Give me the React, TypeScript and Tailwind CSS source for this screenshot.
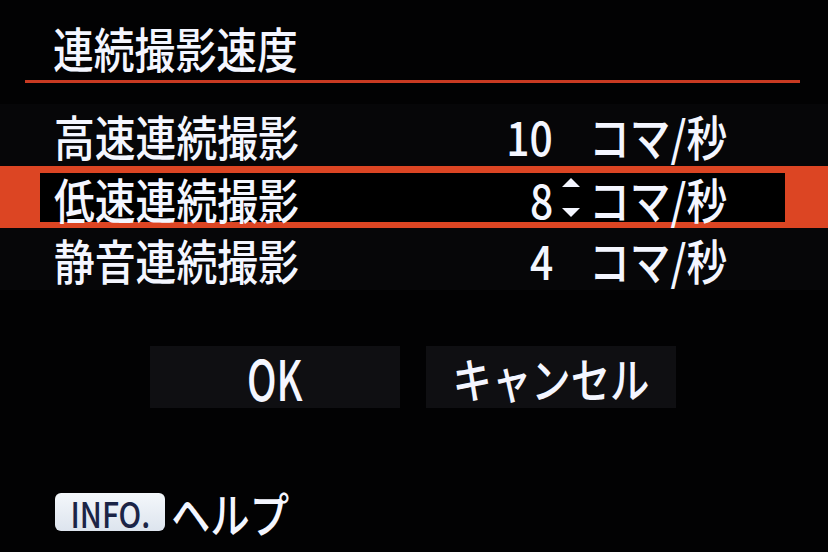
const font = { fontFamily: '"Noto Sans CJK JP", "Noto Sans", sans-serif' };

type Rate = { label: string; value: string; selected?: boolean };

const rates: Rate[] = [
  { label: "高速連続撮影", value: "10" },
  { label: "低速連続撮影", value: "8", selected: true },
  { label: "静音連続撮影", value: "4" },
];

// narrow camera-menu lettering
const Narrow = ({ children, right = false, className = "" }: { children: React.ReactNode; right?: boolean; className?: string }) => (
  <span className={`inline-block whitespace-nowrap scale-x-[0.85] ${right ? "origin-right" : "origin-left"} ${className}`}>
    {children}
  </span>
);

const UpDown = () => (
  <svg width="18" height="40" viewBox="0 0 18 40" className="ml-[9px]">
    <polygon points="9,0 18,9 0,9" fill="#f4f6ff" />
    <polygon points="0,30 18,30 9,39" fill="#f4f6ff" />
  </svg>
);

const RateRow = ({ rate }: { rate: Rate }) => {
  const cells = (
    <>
      <div className={rate.selected ? "w-[414px] pl-[14px]" : "w-[454px] pl-[54px]"}>
        <Narrow>{rate.label}</Narrow>
      </div>
      <div className="w-[99px] flex justify-end">
        <Narrow right>{rate.value}</Narrow>
      </div>
      <div className="w-[36px] flex items-center">{rate.selected && <UpDown />}</div>
      <div>
        <Narrow>コマ/秒</Narrow>
      </div>
    </>
  );

  if (rate.selected) {
    return (
      <div className="h-[62px] bg-[#dc4523] pl-[40px] pr-[43px] pt-[7px] pb-[6px]">
        <div className="h-full bg-black flex items-center leading-[40px]">{cells}</div>
      </div>
    );
  }
  return <div className="h-[62px] flex items-center leading-[40px] bg-[#060608]">{cells}</div>;
};

export default function App() {
  return (
    <div className="w-[828px] h-[552px] bg-[#020203] text-[#f4f6ff] font-medium overflow-hidden" style={font}>
      <div className="h-[80px] flex items-center pl-[53px] pt-[34px] pb-[20px] text-[48px] leading-[40px]">
        <Narrow>連続撮影速度</Narrow>
      </div>
      <div className="ml-[25px] mr-[28px] h-[3px] bg-[#c83a22]" />

      <div className="mt-[21px] text-[48px]">
        {rates.map((r) => (
          <RateRow key={r.label} rate={r} />
        ))}
      </div>

      <div className="mt-[56px] pl-[150px] flex gap-[26px] leading-none">
        <div className="w-[250px] h-[62px] bg-[#0f0f12] flex items-center justify-center text-[56px]">
          <span className="inline-block scale-x-[0.7]">OK</span>
        </div>
        <div className="w-[250px] h-[62px] bg-[#0f0f12] flex items-center justify-center text-[48px]">
          <span className="inline-block scale-x-[0.82]">キャンセル</span>
        </div>
      </div>

      <div className="mt-[80px] pl-[55px] flex items-center gap-[6px] leading-none">
        <div className="w-[110px] h-[38px] rounded-[6px] bg-gradient-to-b from-[#f4f7fb] to-[#dde4ee] flex items-center justify-center">
          <span className="inline-block scale-x-[0.86] text-[35px] text-[#1b2446]">INFO.</span>
        </div>
        <span className="inline-block origin-left scale-x-[0.82] text-[48px]">ヘルプ</span>
      </div>
    </div>
  );
}
